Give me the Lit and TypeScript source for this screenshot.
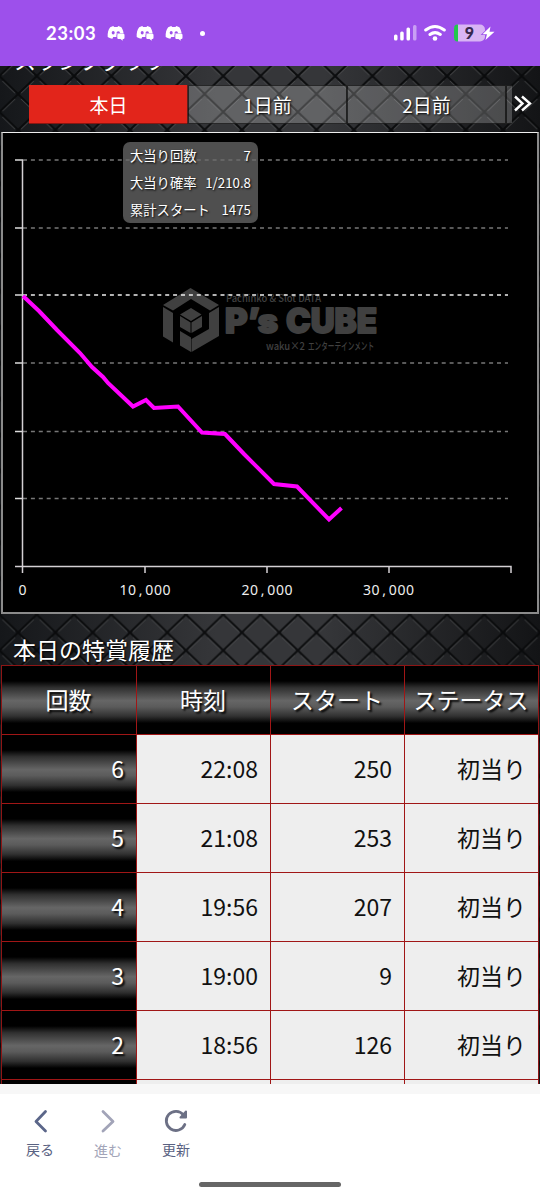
import { LitElement, html, svg, css } from "lit";
import { customElement } from "lit/decorators.js";

const ROWS = [
  ["6", "22:08", "250", "初当り"],
  ["5", "21:08", "253", "初当り"],
  ["4", "19:56", "207", "初当り"],
  ["3", "19:00", "9", "初当り"],
  ["2", "18:56", "126", "初当り"],
  ["", "", "", ""],
];
const HEADS = ["回数", "時刻", "スタート", "ステータス"];
const STATS = [["大当り回数", "7"], ["大当り確率", "1/210.8"], ["累計スタート", "1475"]];
const TICKS: [number, string][] = [[22.5, "0"], [145, "10,000"], [267, "20,000"], [388.5, "30,000"]];

/** Evenly pitched glyph centres for an axis label centred on cx. */
const pitch = (cx: number, label: string) =>
  [...label].map((_, i) => (cx + (i - (label.length - 1) / 2) * 8.6).toFixed(1)).join(" ");

const chatIcon = html`<svg class="chat" width="18" height="16" viewBox="0 0 18 16">
  <path fill="#fff" d="M3.200 2.200 6.200 1l1 1h3.200l1-1 3 1.200c1.200 1.800 2 3.900 2.200 6.200H11a1.600 1.600 0 0 0-1.600 1.600V12H6.200l-.8 1.800C3.500 13.500 2 12.800.7 12 .4 8 1.200 4.800 3.200 2.200Z"/>
  <ellipse cx="6.200" cy="7.800" rx="1.500" ry="1.800" fill="#9d50eb"/><path d="M9.300 8.500q.3-2.200 2-2.200t1.700 1.900z" fill="#9d50eb"/>
  <path fill="#fff" d="M11.300 8.800h5q1.200 0 1.200 1.200v2.800q0 1.200-1.200 1.200h-.6v1.700L13.500 14h-2.200q-1 0-1-1.200V10q0-1.200 1-1.200Z"/>
</svg>`;

@customElement("app-root")
export class AppRoot extends LitElement {
  static styles = css`
    :host { display: flex; flex-direction: column; width: 540px; height: 1200px; overflow: hidden; position: relative; background: #fff; font-family: "Noto Sans CJK JP", sans-serif; color: #fff; }
    * { box-sizing: border-box; }
    svg { display: block; flex: none; }
    .status { height: 66px; flex: none; background: #9d50eb; display: flex; align-items: center; padding: 0 45px 0 46px; position: relative; z-index: 2; }
    .time { font: 700 18.5px/24px Lato, sans-serif; letter-spacing: .5px; width: 61px; white-space: nowrap; }
    .chat { margin-right: 11px; }
    .dot { width: 5px; height: 5px; border-radius: 50%; background: #fff; margin-left: 6px; margin-top: 1px; }
    .sys { margin-left: auto; }
    .view { height: 1018px; flex: none; overflow: hidden; position: relative; background: #222; }
    .texture { position: absolute; inset: 0; }
    .content { position: relative; display: flex; flex-direction: column; }
    .cut { height: 19px; font-size: 22px; line-height: 24px; padding-left: 14px; }
    .cut span { display: block; margin-top: -19px; }
    .tabs { display: flex; height: 39px; margin-left: 29px; }
    .tab { width: 160px; height: 39px; border: 1px solid rgba(0,0,0,.6); border-left-width: 2px; margin-left: -1px; background: rgba(255,255,255,.22); text-align: center; font-size: 19px; line-height: 38px; text-shadow: 1px 1px 2px #000; }
    .tab.on { width: 159px; margin-left: 0; border: 0; border-bottom: 1px solid #8a1611; background: #e2251b; text-shadow: none; line-height: 39px; }
    .tab.rest { width: 7px; border-right: 0; }
    .more { margin: 10px 0 0 1px; }
    .chart { height: 482px; margin: 8px 1px 0; background: #000; border: 2px solid #8b8b8b; border-top: 1px solid #eee; position: relative; }
    .plot { margin: -1px 0 0 -3px; }
    .tip { position: absolute; left: 120px; top: 9px; width: 135px; height: 81px; border-radius: 7px; background: rgba(105,105,105,.75); padding: 1px 7px 0; font-size: 13.3px; line-height: 26.9px; text-shadow: 1px 1px 2px #000; }
    .tip div { display: flex; justify-content: space-between; white-space: nowrap; }
    h2 { font-weight: 400; font-size: 23px; line-height: 33px; height: 51px; padding: 19px 0 0 13px; margin: 0; text-shadow: 1px 1px 2px #000; }
    .grid { display: grid; grid-template-columns: 134px 133px 133px 133px; grid-auto-rows: 68px; gap: 1px; width: 538px; margin-left: 1px; border: 1px solid #8d1515; border-bottom: 0; background: #a01616; }
    .c { background: #eee; color: #111; font-size: 23px; line-height: 67px; text-align: right; padding-right: 12px; white-space: nowrap; overflow: hidden; }
    .c.dark { color: #fff; text-shadow: 2px 2px 2px #000; background: linear-gradient(#000 22%, #303030 32%, #666 51%, #5b5b5b 60%, #303030 74%, #000 84%); }
    .c.head { text-align: center; padding: 0 1px 0 0; }
    .bar { flex: 1; background: #fff; border-top: 10px solid #f7f7f7; display: flex; position: relative; padding-left: 6px; }
    .item { width: 68px; display: flex; flex-direction: column; align-items: center; padding-top: 15px; font-size: 14px; line-height: 20px; color: #596282; }
    .item svg { margin-bottom: 6px; }
    .item.off { color: #a2a4b8; }
    .item.off svg { margin-bottom: 7px; }
    .home { position: absolute; left: 199px; top: 88px; width: 142px; height: 5px; border-radius: 3px; background: #666; }
  `;

  render() {
    return html`
      <div class="status">
        <span class="time">23:03</span>${chatIcon}${chatIcon}${chatIcon}<span class="dot"></span>
        <svg class="sys" width="102" height="20" viewBox="393 23.500 102 20">
          <g fill="#fff"><rect x="394" y="35" width="3.500" height="6" rx="1.500"/><rect x="400.200" y="32" width="3.500" height="9" rx="1.500"/><rect x="406.500" y="28" width="3.500" height="13" rx="1.500"/><rect x="413" y="25.500" width="3.500" height="15.500" rx="1.500" opacity=".45"/><circle cx="435" cy="39" r="2.300"/></g>
          <g fill="none" stroke="#fff" stroke-width="3" stroke-linecap="round"><path d="M425.700 30.500q9.300-7 18.600 0M430 35q5-3.800 10.300 0"/></g>
          <rect x="454" y="25" width="31" height="17" rx="5" fill="#d8b4f4"/>
          <path d="M458 25h-.5q-3.500 0-3.500 4v9q0 4 3.500 4h.5z" fill="#22c64e"/>
          <text x="469.500" y="39" text-anchor="middle" font-family="Lato" font-weight="900" font-size="16" fill="#37284e">9</text>
          <path d="M490.500 27 482.500 34.700h4.500L485.500 40.500l9-8.200h-5z" fill="#fff" stroke="#9d50eb" stroke-width="1.500" paint-order="stroke"/>
        </svg>
      </div>
      <div class="view">
        <svg class="texture" width="540" height="1018" viewBox="0 66 540 1018">
          <defs>
            <linearGradient id="base"><stop offset="0" stop-color="#15171a"/><stop offset=".4" stop-color="#353639"/><stop offset=".6" stop-color="#353639"/><stop offset="1" stop-color="#131416"/></linearGradient>
            <pattern id="mesh" x="279.200" y="632.500" width="37.300" height="35.900" patternUnits="userSpaceOnUse">
              <path d="M3 4.900 15.600 17M34.300 4.900 21.700 17M21.700 22.900 34.300 35M15.600 22.900 3 35" fill="none" stroke="#5a5b5e" stroke-width="1" opacity=".6"/>
              <path d="M-1.900-1.800 39.200 37.700M39.200-1.800-1.900 37.700M-2 34 2 38M35.300-2 39.300 2" fill="none" stroke="#08090a" stroke-width="2" opacity=".9"/>
            </pattern>
          </defs>
          <rect y="66" width="540" height="1018" fill="url(#base)"/><rect y="66" width="540" height="1018" fill="url(#mesh)"/>
        </svg>
        <div class="content">
          <div class="cut"><span>スランプグラフ</span></div>
          <div class="tabs">
            <div class="tab on">本日</div><div class="tab">1日前</div><div class="tab">2日前</div><div class="tab rest"></div>
            <svg class="more" width="20" height="18" viewBox="0 0 20 18" fill="none" stroke="#fff" stroke-width="2.400"><path d="m2 1.500 7.500 7-7.500 7M9 1.500l8 7-8 7"/></svg>
          </div>
          <div class="chart">
            ${this.plot()}
            <div class="tip">${STATS.map(([k, v]) => html`<div><span>${k}</span><span>${v}</span></div>`)}</div>
          </div>
          <h2>本日の特賞履歴</h2>
          <div class="grid">
            ${HEADS.map((h) => html`<div class="c dark head">${h}</div>`)}
            ${ROWS.map((r) => r.map((v, i) => html`<div class="c ${i ? "" : "dark"}">${v}</div>`))}
          </div>
        </div>
      </div>
      <div class="bar">
        <div class="item"><svg width="24" height="24" viewBox="0 0 24 24" fill="none" stroke="#5b6689" stroke-width="2.800" stroke-linecap="round" stroke-linejoin="round"><path d="M17.500 2.500 8 12.500 17.500 22"/></svg>戻る</div>
        <div class="item off"><svg width="24" height="24" viewBox="0 0 24 24" fill="none" stroke="#a2a4b8" stroke-width="2.800" stroke-linecap="round" stroke-linejoin="round"><path d="m7 2.500 10 10-10 9.500"/></svg>進む</div>
        <div class="item"><svg width="24" height="24" viewBox="0 0 24 24" fill="none" stroke="#6c7085" stroke-width="2.800" stroke-linecap="round" stroke-linejoin="round"><path d="M19.500 6A9.600 9.600 0 1 0 20.800 15.500"/><path d="M22 2.500v6h-5.500Z" fill="#6c7085" stroke-width="2"/></svg>更新</div>
        <div class="home"></div>
      </div>`;
  }

  plot() {
    const ys = [160, 228, 295, 363, 431.5, 498.5];
    return svg`<svg class="plot" width="538" height="480" viewBox="0 132 538 480">
      <g fill="#404040">
        <path d="M163 305 190.500 288 219 305l-9 5.500-19-11.500-18 11.500z"/>
        <path d="M163 307l10 6v29.500l-10-6z"/>
        <path d="M219 307v29l-27.500 16v-13l17.500-10v-16z"/>
        <path d="M180 331l11 6.500v14.500l-11-6.500z"/>
        <path d="M191 308l10.500 6.500-10.500 6.500-11-6.500zM180 316l10.500 6.500v10.500l-10.500-6zM191.500 322.500l10.500-6.500v11l-10.500 6z"/>
        <g font-family="Inter, sans-serif" font-weight="900" font-size="33.500" stroke="#404040" stroke-width="1.800" stroke-linejoin="round">
          <text x="225" y="333" textLength="53" lengthAdjust="spacingAndGlyphs">P’s</text>
          <text x="286" y="333" textLength="91" lengthAdjust="spacingAndGlyphs">CUBE</text>
        </g>
        <g font-family="Noto Sans CJK JP" font-weight="500">
          <text x="226" y="301.500" font-size="10" textLength="95" lengthAdjust="spacingAndGlyphs">Pachinko &amp; Slot DATA</text>
          <text x="266" y="349.500" font-size="11" textLength="39" lengthAdjust="spacingAndGlyphs">waku×2</text>
          <text x="308" y="349.500" font-size="10.500" textLength="66" lengthAdjust="spacingAndGlyphs">エンターテインメント</text>
        </g>
      </g>
      ${ys.map((y, i) => svg`<path d="M23 ${y}H508" stroke="${i === 2 ? "#eee" : "#777"}" stroke-width="1.400" stroke-dasharray="4 3.900"/><path d="M15 ${y}h8" stroke="#ddd" stroke-width="1.500"/>`)}
      <path d="M22.500 160V573M15 566.500H511V573M145 566.500v6.500M267 566.500v6.500M389 566.500v6.500" fill="none" stroke="#d4d0d4" stroke-width="1.500"/>
      <path d="M23 296 39 311 57 330 80 353 92 367 103 377 108 383 133 406.500 146 400 154 408 178 406.500 202 432.500 225 434 244 454 274 484 297 486.500 329 519.500 341.500 508" fill="none" stroke="#f0f" stroke-width="4"/>
      <g fill="#eee" font-family="Noto Sans, sans-serif" font-size="14" text-anchor="middle">
        ${TICKS.map(([x, label]) => svg`<text x="${pitch(x, label)}" y="595">${label}</text>`)}
      </g>
    </svg>`;
  }
}
